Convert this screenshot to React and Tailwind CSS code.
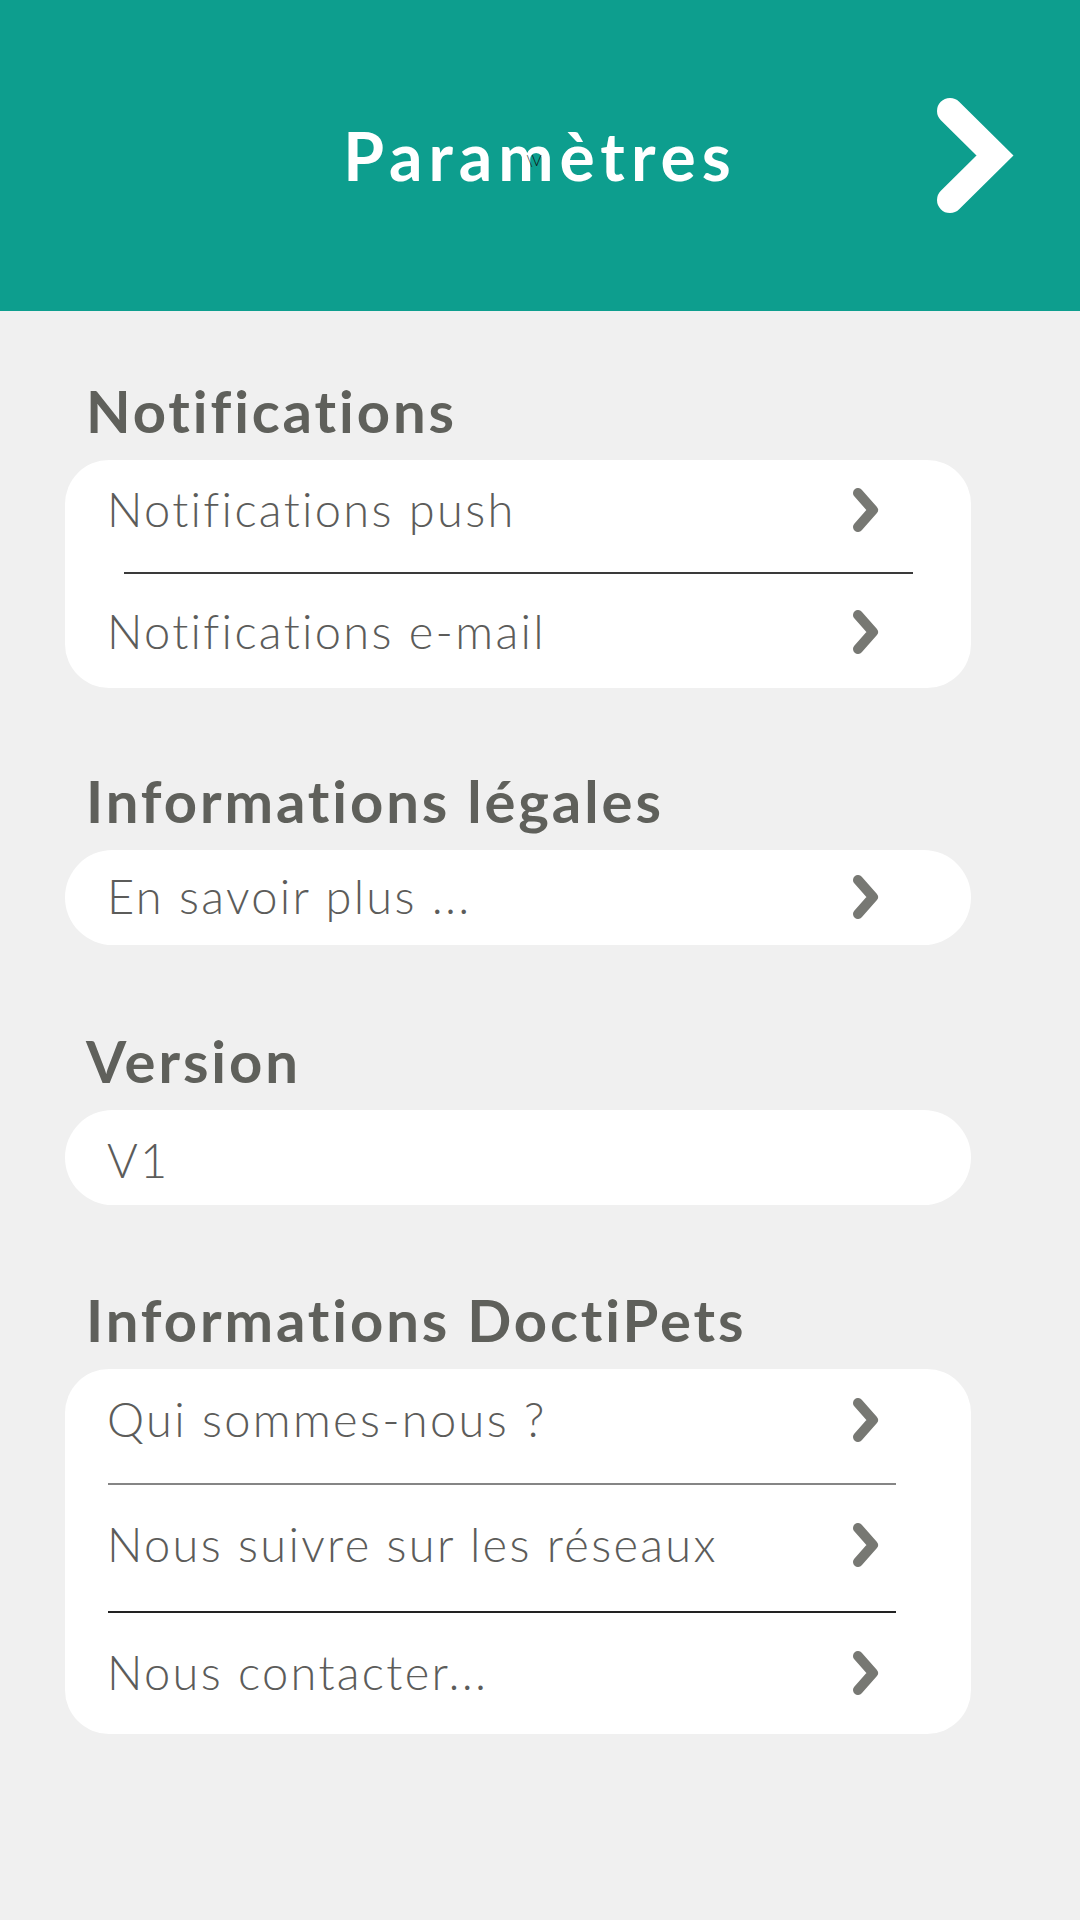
import React from 'react'

const font = { fontFamily: 'Lato, "Noto Sans", sans-serif' }

function Chevron() {
  return (
    <svg width="26" height="44" viewBox="0 0 26 44" className="mt-[2px] shrink-0">
      <polyline points="5,5 20,22 5,39" fill="none" stroke="#777873" strokeWidth="10" strokeLinecap="round" strokeLinejoin="round" />
    </svg>
  )
}

function Row({ label, pt, h, arrow = true }) {
  return (
    <div className={`flex items-start justify-between pl-[42px] pr-[92px] ${pt} ${h}`}>
      <span className="text-[47px] leading-[47px] font-light tracking-[2.3px] text-[#5c5c5a] whitespace-nowrap">{label}</span>
      {arrow && <Chevron />}
    </div>
  )
}

function Heading({ children, mt }) {
  return (
    <h2 className={`pl-[21px] text-[58px] leading-[58px] font-bold tracking-[2.9px] text-[#5f605b] ${mt} mb-[20px]`}>{children}</h2>
  )
}

export default function App() {
  return (
    <div className="min-h-[1920px] w-[1080px] bg-[#f0f0f0]" style={font}>
      <header className="relative grid h-[311px] grid-cols-[1fr_auto_1fr] items-center bg-[#0d9e8e]">
        <div />
        <h1 className="relative text-[66px] leading-[66px] font-bold tracking-[6px] text-white">
          Paramètres
          <span className="absolute left-[183px] top-[30px] text-[15px] leading-[15px] font-light tracking-normal text-[#111]">\V</span>
        </h1>
        <div className="flex justify-end pr-[64px]">
          <svg width="79" height="115" viewBox="0 0 79 115">
            <polyline points="13,13 58,57.5 13,102" fill="none" stroke="#fff" strokeWidth="26" strokeLinecap="round" strokeLinejoin="miter" strokeMiterlimit="10" />
          </svg>
        </div>
      </header>

      <main className="pl-[65px] pr-[109px]">
        <Heading mt="mt-[71px]">Notifications</Heading>
        <div className="rounded-[44px] bg-white">
          <Row label="Notifications push" pt="pt-[26px]" h="h-[112px]" />
          <div className="ml-[59px] mr-[58px] h-[2px] bg-[#3a3a3a]" />
          <Row label="Notifications e-mail" pt="pt-[34px]" h="h-[114px]" />
        </div>

        <Heading mt="mt-[84px]">Informations légales</Heading>
        <div className="rounded-[48px] bg-white">
          <Row label="En savoir plus ..." pt="pt-[23px]" h="h-[95px]" />
        </div>

        <Heading mt="mt-[87px]">Version</Heading>
        <div className="rounded-[48px] bg-white">
          <Row label="V1" pt="pt-[27px]" h="h-[95px]" arrow={false} />
        </div>

        <Heading mt="mt-[86px]">Informations DoctiPets</Heading>
        <div className="rounded-[44px] bg-white">
          <Row label="Qui sommes-nous ?" pt="pt-[27px]" h="h-[114px]" />
          <div className="ml-[43px] mr-[75px] h-[2px] bg-[#858585]" />
          <Row label="Nous suivre sur les réseaux" pt="pt-[36px]" h="h-[126px]" />
          <div className="ml-[43px] mr-[75px] h-[2px] bg-[#222]" />
          <Row label="Nous contacter..." pt="pt-[36px]" h="h-[121px]" />
        </div>
      </main>
    </div>
  )
}
